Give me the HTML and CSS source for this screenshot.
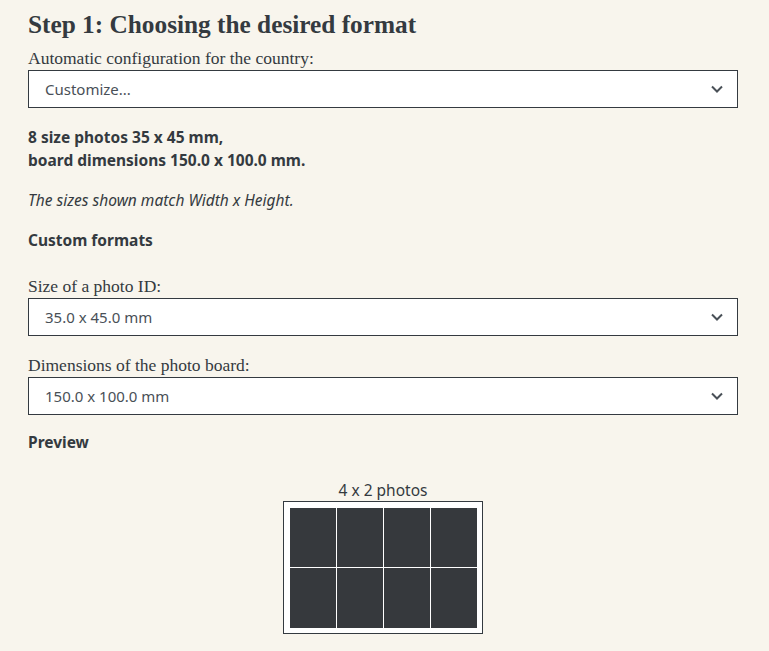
FILE: index.html
```html
<!DOCTYPE html>
<html>
<head>
    <meta charset="UTF-8">
    <title>Step 1</title>
    <link rel="stylesheet" href="styles.css">
</head>
<body>
    <div class="step">
        <h2 class="step-title">Step 1: Choosing the desired format</h2>

        <label class="field-label">Automatic configuration for the country:</label>
        <div class="select">
            <span>Customize...</span>
            <svg class="chevron" viewBox="0 0 12 8"><path d="M1 1.5 6 6.5 11 1.5"/></svg>
        </div>

        <p class="summary">8 size photos 35 x 45 mm,<br>board dimensions 150.0 x 100.0 mm.</p>
        <p class="note">The sizes shown match Width x Height.</p>
        <p class="subhead">Custom formats</p>

        <label class="field-label">Size of a photo ID:</label>
        <div class="select">
            <span>35.0 x 45.0 mm</span>
            <svg class="chevron" viewBox="0 0 12 8"><path d="M1 1.5 6 6.5 11 1.5"/></svg>
        </div>

        <label class="field-label">Dimensions of the photo board:</label>
        <div class="select">
            <span>150.0 x 100.0 mm</span>
            <svg class="chevron" viewBox="0 0 12 8"><path d="M1 1.5 6 6.5 11 1.5"/></svg>
        </div>

        <p class="subhead preview-head">Preview</p>

        <div class="preview">
            <div class="preview-caption">4 x 2 photos</div>
            <div class="board">
                <div class="photos">
                    <i></i><i></i><i></i><i></i>
                    <i></i><i></i><i></i><i></i>
                </div>
            </div>
        </div>
    </div>
</body>
</html>
```

FILE: styles.css
```css
html{
    background:#f8f5ed;
}
body{
    margin:0;
    color:#343a40;
    font-family:"Noto Sans","Open Sans",sans-serif;
    font-size:15.5px;
}
.step{
    padding:9px 31px 0 28px;
}
.step-title{
    margin:0 0 8px;
    font-family:"Liberation Serif",serif;
    font-size:25.3px;
    font-weight:bold;
    line-height:30px;
}
.field-label{
    display:block;
    font-family:"Liberation Serif",serif;
    font-size:17.5px;
    line-height:22px;
    margin-bottom:1px;
}
.select{
    display:flex;
    align-items:center;
    justify-content:space-between;
    height:38px;
    box-sizing:border-box;
    border:1px solid #343a40;
    background:#fff;
    padding:0 14px 0 16px;
    color:#495057;
    font-size:15px;
}
.chevron{
    width:12px;
    height:8px;
    fill:none;
    stroke:#495057;
    stroke-width:2;
}
.summary{
    margin:18px 0 0;
    font-weight:bold;
    line-height:23px;
}
.note{
    margin:17px 0 0;
    font-style:italic;
    line-height:23px;
}
.subhead{
    margin:17px 0 23px;
    font-weight:bold;
    line-height:23px;
}
.select + .field-label{
    margin-top:18px;
}
.preview-head{
    margin:16px 0 0;
}
.preview{
    display:flex;
    flex-direction:column;
    align-items:center;
    margin-top:27px;
}
.preview-caption{
    line-height:18px;
    margin-bottom:2px;
}
.board{
    width:200px;
    height:133px;
    box-sizing:border-box;
    border:1px solid #343a40;
    background:#fff;
    display:flex;
    align-items:center;
    justify-content:center;
}
.photos{
    display:grid;
    grid-template-columns:repeat(4,46px);
    grid-template-rows:repeat(2,59.5px);
    gap:1px;
}
.photos i{
    background:#36393d;
}
```
